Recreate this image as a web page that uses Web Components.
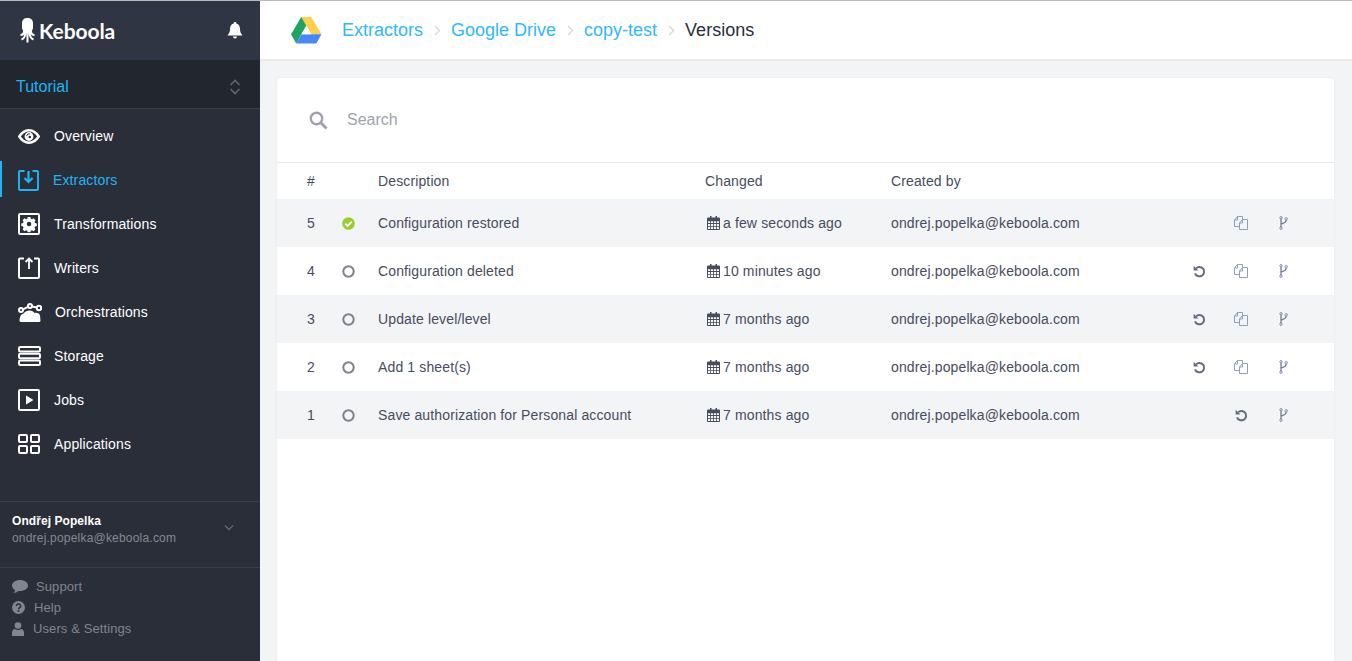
<!DOCTYPE html>
<html lang="en"><head><meta charset="utf-8"><title>Versions</title>
<style>
html,body{margin:0;height:661px;overflow:hidden;background:#f3f4f6;font-family:"Liberation Sans",Arial,sans-serif}
</style></head><body>
<kb-app></kb-app>
<script>
const ICONS={
eye:'<svg width="22" height="15" viewBox="0 0 22 15"><path d="M1.300 7.500C4 3.300 7 1.300 11 1.300s7 2 9.700 6.200C18 11.700 15 13.700 11 13.700S4 11.700 1.300 7.500z" fill="none" stroke="currentColor" stroke-width="2.500"/><circle cx="11" cy="7.500" r="4.400" fill="currentColor"/><path d="M8.600 7a2.800 2.800 0 0 1 3.500-2.100" fill="none" stroke="#2a2e39" stroke-width="1"/><circle cx="11.800" cy="8" r="1.300" fill="#2a2e39"/></svg>',
extract:'<svg width="21" height="21" viewBox="0 0 21 21"><path d="M6.500 1H2a1 1 0 0 0-1 1v17a1 1 0 0 0 1 1h17a1 1 0 0 0 1-1V2a1 1 0 0 0-1-1h-4.500" fill="none" stroke="currentColor" stroke-width="1.900"/><path d="M10.500 1v10.500M6.500 8l4 4 4-4" fill="none" stroke="currentColor" stroke-width="2.200"/></svg>',
gear:'<svg width="22" height="22" viewBox="0 0 22 22"><rect x="1" y="1" width="20" height="20" rx="1" fill="none" stroke="currentColor" stroke-width="2"/><path fill="currentColor" fill-rule="evenodd" d="M9.600 4h2.800l.4 1.900 1.300.5 1.700-1 2 2-1 1.700.5 1.300 1.900.4v2.800l-1.900.4-.5 1.300 1 1.700-2 2-1.700-1-1.300.5-.4 1.500H9.600l-.4-1.500-1.300-.5-1.700 1-2-2 1-1.700-.5-1.300-1.900-.4v-2.800l1.900-.4.500-1.300-1-1.700 2-2 1.700 1 1.300-.5zM11 9a2.400 2.400 0 1 0 0 4.800A2.400 2.400 0 0 0 11 9z" transform="translate(.6 .2) scale(.95)"/></svg>',
write:'<svg width="22" height="22" viewBox="0 0 22 22"><path d="M6 1.500H2a1 1 0 0 0-1 1V20a1 1 0 0 0 1 1h18a1 1 0 0 0 1-1V2.500a1 1 0 0 0-1-1h-4" fill="none" stroke="currentColor" stroke-width="2"/><path d="M11 12V1.500M7.500 5L11 1.500 14.500 5" fill="none" stroke="currentColor" stroke-width="1.800"/></svg>',
orch:'<svg width="24" height="19" viewBox="0 0 24 19"><path fill="currentColor" d="M2.500 19l-1-1C1.500 14.500 2.500 11.500 5.500 10.500c1.500-2 3.500-3 6-3 2.500 0 4 1 5 2.500 3-.5 5 .5 5.500 2.500l.5 5.500-1 1z"/><g fill="#2a2e39" stroke="currentColor" stroke-width="2"><circle cx="3" cy="7" r="2"/><circle cx="12" cy="3" r="2"/><circle cx="21" cy="5" r="2.200"/></g><path d="M5 6.300l5-2.500M14 3.500l5 1" stroke="currentColor" stroke-width="2"/></svg>',
storage:'<svg width="23" height="20" viewBox="0 0 23 20"><g fill="none" stroke="currentColor" stroke-width="2"><rect x="1" y="1" width="21" height="4.500" rx="1.200"/><rect x="1" y="7.700" width="21" height="4.500" rx="1.200"/><rect x="1" y="14.500" width="21" height="4.500" rx="1.200"/></g></svg>',
jobs:'<svg width="22" height="22" viewBox="0 0 22 22"><rect x="1" y="1" width="20" height="20" rx="1" fill="none" stroke="currentColor" stroke-width="2"/><path d="M8 6.500v9l7.500-4.500z" fill="currentColor"/></svg>',
apps:'<svg width="22" height="20" viewBox="0 0 22 20"><g fill="none" stroke="currentColor" stroke-width="2"><rect x="1" y="1" width="8" height="7" rx="1"/><rect x="13" y="1" width="8" height="7" rx="1"/><rect x="1" y="12" width="8" height="7" rx="1"/><rect x="13" y="12" width="8" height="7" rx="1"/></g></svg>',
bell:'<svg width="16" height="17" viewBox="0 0 16 17"><path fill="currentColor" d="M8 0a1.300 1.300 0 0 1 1.300 1.500C12 2 13 4.500 13 7c0 3 1 4.500 2.500 6.500H.5C2 11.500 3 10 3 7c0-2.500 1-5 3.700-5.500A1.300 1.300 0 0 1 8 0zM6 14.500h4a2 2 0 0 1-4 0z"/></svg>',
updown:'<svg width="12" height="16" viewBox="0 0 12 16"><path d="M1.500 6L6 1.500 10.500 6M1.500 10L6 14.500 10.500 10" fill="none" stroke="currentColor" stroke-width="1.600"/></svg>',
down:'<svg width="10" height="7" viewBox="0 0 10 7"><path d="M1 1.500l4 4 4-4" fill="none" stroke="currentColor" stroke-width="1.300"/></svg>',
chat:'<svg width="16" height="13" viewBox="0 0 16 13"><path fill="currentColor" d="M8 0c4.400 0 8 2.400 8 5.500S12.400 11 8 11H6.500C5 12.300 3.300 12.800 1.500 13c1-1 1.500-2 1.600-3C1.200 9 0 7.400 0 5.500 0 2.400 3.600 0 8 0z"/></svg>',
help:'<svg width="13" height="13" viewBox="0 0 13 13"><circle cx="6.500" cy="6.500" r="6.500" fill="currentColor"/><path d="M4.300 5a2.200 2 0 1 1 3.300 1.700c-.8.500-1.100.8-1.100 1.500" fill="none" stroke="#2a2e39" stroke-width="1.500"/><rect x="5.600" y="9.200" width="1.800" height="1.700" fill="#2a2e39"/></svg>',
user:'<svg width="12" height="14" viewBox="0 0 12 14"><circle cx="6" cy="3.500" r="3.300" fill="currentColor"/><path fill="currentColor" d="M0 14v-3.500C0 8.500 1.500 7.200 3 7c1.800 1.300 4.200 1.300 6 0 1.500.2 3 1.500 3 3.500V14z"/></svg>',
search:'<svg width="19" height="19" viewBox="0 0 19 19"><circle cx="7.500" cy="7.500" r="5.700" fill="none" stroke="currentColor" stroke-width="2.400"/><path d="M11.800 11.800l5.700 5.700" stroke="currentColor" stroke-width="3"/></svg>',
check:'<svg width="13" height="13" viewBox="0 0 13 13"><circle cx="6.500" cy="6.500" r="6.300" fill="#98ce2e"/><path d="M3.300 6.700l2.300 2.300 4.200-4.300" fill="none" stroke="#fff" stroke-width="1.800"/></svg>',
ring:'<svg width="13" height="13" viewBox="0 0 13 13"><circle cx="6.500" cy="6.500" r="5.200" fill="none" stroke="#7d8190" stroke-width="2"/></svg>',
cal:'<svg width="13" height="14" viewBox="0 0 13 14"><path fill="#474d5e" fill-rule="evenodd" d="M3 0h1.500v1.500h4V0H10v1.500h2a1 1 0 0 1 1 1V13a1 1 0 0 1-1 1H1a1 1 0 0 1-1-1V2.500a1 1 0 0 1 1-1h2zM1 5.200v1.900h2.200V5.200zm3 0v1.900h2.100V5.200zm2.900 0v1.900H9V5.200zm2.900 0v1.900H12V5.200zM1 7.900v2h2.200v-2zm3 0v2h2.100v-2zm2.900 0v2H9v-2zm2.900 0v2H12v-2zM1 10.700V13h2.200v-2.300zm3 0V13h2.100v-2.300zm2.900 0V13H9v-2.300zm2.900 0V13H12v-2.300z"/></svg>',
restore:'<svg width="13" height="13" viewBox="0 0 13 13"><path d="M3.200 3.200A4.700 4.700 0 1 1 2 8.300" fill="none" stroke="#636c80" stroke-width="2"/><path d="M.6 .8v4.800h4.800z" fill="#636c80"/></svg>',
copy:'<svg width="14" height="14" viewBox="0 0 14 14"><g fill="none" stroke="#8d9fbe" stroke-width="1"><path d="M5.500 10.500h-5V4l3-3.500h5v3"/><path d="M3.500 .5V4h-3"/><path d="M8.500 3.500h5v10h-8V7z"/><path d="M8.500 3.500V7h-3"/></g></svg>',
branch:'<svg width="9" height="14" viewBox="0 0 9 14"><g fill="none" stroke="#7d8ca6" stroke-width="1"><circle cx="2" cy="1.800" r="1.200"/><circle cx="2" cy="12.200" r="1.200"/><circle cx="7.200" cy="2.800" r="1.200"/></g><path d="M2 3v8M7.200 4c0 2-1 3-5.200 4" fill="none" stroke="#6d7d99" stroke-width="1.300"/></svg>'
};

function def(name,css,html,setup){
  customElements.define(name,class extends HTMLElement{
    connectedCallback(){
      if(this.shadowRoot)return;
      const r=this.attachShadow({mode:'open'});
      r.innerHTML='<style>'+css+'</style>'+(typeof html==='function'?html(this):html);
      if(setup)setup(this,r);
    }
  });
}

def('kb-nav-item',`
:host{display:flex;align-items:center;height:44px;color:#fff;font-size:14px;letter-spacing:.13px;position:relative}
:host([active]){color:#1fb5f5}
:host([active])::before{content:"";position:absolute;left:0;top:3px;bottom:5px;width:2px;background:#1fb5f5}
.i{width:54px;flex:none;display:flex;justify-content:flex-start;padding-left:18px;box-sizing:border-box;align-items:center}
svg{display:block}
`,h=>`<span class="i" style="width:${h.getAttribute('tx')||54}px">${ICONS[h.getAttribute('icon')]}</span><slot></slot>`);

def('kb-foot-link',`
:host{display:flex;align-items:center;height:21px;color:#80858f;font-size:13px;letter-spacing:.1px;line-height:21px}
.i{display:flex;width:var(--w);flex:none}
svg{display:block}
`,h=>`<span class="i" style="--w:${h.getAttribute('tx')}px">${ICONS[h.getAttribute('icon')]}</span><slot></slot>`);

def('kb-sidebar',`
:host{display:flex;flex-direction:column;width:260px;flex:none;height:660px;background:#2a2e39;color:#fff}
.brand{height:59px;background:#2f3542;display:flex;align-items:center;justify-content:space-between;padding:0 17px 0 20px;box-sizing:border-box}
.logo{display:flex;align-items:center;gap:4px;font-family:Lato,"Liberation Sans",sans-serif;font-weight:700;font-size:21px;letter-spacing:-.1px;color:#fff}
.project{height:49px;background:#22262f;border-bottom:1px solid #393e4a;box-sizing:border-box;display:flex;align-items:center;justify-content:space-between;padding:6px 19px 0 16px;font-size:16px;color:#1fb5f5}
.project svg{color:#5f6572;display:block}
nav{padding-top:5px;flex:1}
.me{border-top:1px solid #393e4a;height:66px;box-sizing:border-box;padding:11px 26px 0 12px;display:flex;justify-content:space-between;font-size:12px;line-height:17px}
.me b{display:block;color:#fff;font-weight:700;letter-spacing:.07px}
.me span{color:#858a94;letter-spacing:.2px}
.me svg{color:#5d6a80;margin-top:11px;display:block}
.foot{border-top:1px solid #393e4a;height:94px;box-sizing:border-box;padding:8px 12px 0;color:#80858f}
`,`
<div class="brand"><div class="logo"><svg width="15" height="25" viewBox="0 0 15 25"><rect x="2" y="0" width="11" height="14.500" rx="4.800" fill="#fff"/><g fill="none" stroke="#fff" stroke-width="2"><path d="M4 13c0 2.500-1.500 4-3.500 4M11 13c0 2.500 1.500 4 3.500 4M5.500 14c0 4-1.500 6.500-4 7.500M9.500 14c0 4 1.500 6.500 4 7.500M7.500 14v10.500"/></g></svg><span>Keboola</span></div><span style="color:#fff;display:flex">${ICONS.bell}</span></div>
<div class="project"><span>Tutorial</span>${ICONS.updown}</div>
<nav>
<kb-nav-item icon="eye">Overview</kb-nav-item>
<kb-nav-item icon="extract" active tx="53">Extractors</kb-nav-item>
<kb-nav-item icon="gear">Transformations</kb-nav-item>
<kb-nav-item icon="write">Writers</kb-nav-item>
<kb-nav-item icon="orch" tx="55">Orchestrations</kb-nav-item>
<kb-nav-item icon="storage">Storage</kb-nav-item>
<kb-nav-item icon="jobs">Jobs</kb-nav-item>
<kb-nav-item icon="apps">Applications</kb-nav-item>
</nav>
<div class="me"><div><b>Ondřej Popelka</b><span>ondrej.popelka@keboola.com</span></div>${ICONS.down}</div>
<div class="foot">
<kb-foot-link icon="chat" tx="24">Support</kb-foot-link>
<kb-foot-link icon="help" tx="22">Help</kb-foot-link>
<kb-foot-link icon="user" tx="21">Users &amp; Settings</kb-foot-link>
</div>`);

const CHEV='<i><svg width="7" height="11" viewBox="0 0 7 11"><path d="M1 1l4.500 4.500L1 10" fill="none" stroke="#d9dbe0" stroke-width="1.500"/></svg></i>';
def('kb-topbar',`
:host{display:flex;align-items:center;height:60px;box-sizing:border-box;background:#fff;border-bottom:2px solid #e8e9eb;padding-left:31px;font-size:18px;color:#2a2e39;flex:none}
.drive{display:block;margin-right:20px}
a{color:#2fb8ff;text-decoration:none}
i{width:28px;display:flex;justify-content:center;flex:none}
`,`
<svg class="drive" width="31" height="27" viewBox="0 0 32 28"><path fill="#1fa463" d="M10.500 0L21 0 10.500 18 5.300 27.500 0 18z"/><path fill="#ffd04b" d="M10.500 0H21l10.500 18H21z"/><path fill="#4688f4" d="M10.500 18h21l-5.300 9.500H5.300z"/><path fill="#fff" d="M16 9.500L11 18h10z"/></svg>
<a>Extractors</a>${CHEV}<a>Google Drive</a>${CHEV}<a>copy-test</a>${CHEV}<span>Versions</span>`);

const COLS='grid-template-columns:35px 36px 327px 186px 302px 41px 45px 41px;';
def('kb-version-row',`
:host{display:grid;${COLS}height:48px;align-items:center;font-size:14px;letter-spacing:.13px;color:#474d5e;padding-left:30px;background:#fff;box-sizing:border-box}
:host([alt]){background:#f3f4f6}
:host([head]){height:36px;color:#474d5e}
svg{display:block}
.date{display:flex;align-items:center;gap:3px;padding-left:2px}
.ic{display:flex}
`,h=>{
  if(h.hasAttribute('head'))return `<span>#</span><span></span><span>Description</span><span>Changed</span><span>Created by</span>`;
  const a=n=>h.getAttribute(n)||'';
  const acts=a('actions').split(',');
  const cell=(n,extra)=>`<span class="ic"${extra?` style="padding-left:${extra}px"`:''}>${n&&ICONS[n]?ICONS[n]:''}</span>`;
  return `<span>${a('n')}</span><span class="ic">${ICONS[a('status')]}</span><span>${a('desc')}</span><span class="date">${ICONS.cal}${a('when')}</span><span>ondrej.popelka@keboola.com</span>${cell(acts[0])}${cell(acts[1],acts[1]==='restore'?1:0)}${cell(acts[2])}`;
});

def('kb-search',`
:host{display:flex;align-items:center;height:85px;box-sizing:border-box;border-bottom:1px solid #e8e9eb;padding-left:32px;color:#a0a2ae;font-size:16px;flex:none}
svg{display:block;margin-right:19px}
`,`${ICONS.search}<span>Search</span>`);

def('kb-card',`
:host{display:flex;flex-direction:column;background:#fff;margin:17px 18px 0 17px;border-radius:4px 4px 0 0;flex:1;box-shadow:0 0 2px #dfe0e5;overflow:hidden}
`,`<slot></slot>`);

def('kb-app',`
:host{display:flex;height:661px;border-top:1px solid #b9b9b9;box-sizing:border-box}
main{flex:1;display:flex;flex-direction:column;min-width:0}
`,`
<kb-sidebar></kb-sidebar>
<main>
<kb-topbar></kb-topbar>
<kb-card>
<kb-search></kb-search>
<kb-version-row head></kb-version-row>
<kb-version-row alt n="5" status="check" desc="Configuration restored" when="a few seconds ago" actions=",copy,branch"></kb-version-row>
<kb-version-row n="4" status="ring" desc="Configuration deleted" when="10 minutes ago" actions="restore,copy,branch"></kb-version-row>
<kb-version-row alt n="3" status="ring" desc="Update level/level" when="7 months ago" actions="restore,copy,branch"></kb-version-row>
<kb-version-row n="2" status="ring" desc="Add 1 sheet(s)" when="7 months ago" actions="restore,copy,branch"></kb-version-row>
<kb-version-row alt n="1" status="ring" desc="Save authorization for Personal account" when="7 months ago" actions=",restore,branch"></kb-version-row>
</kb-card>
</main>`);
</script>
</body></html>
